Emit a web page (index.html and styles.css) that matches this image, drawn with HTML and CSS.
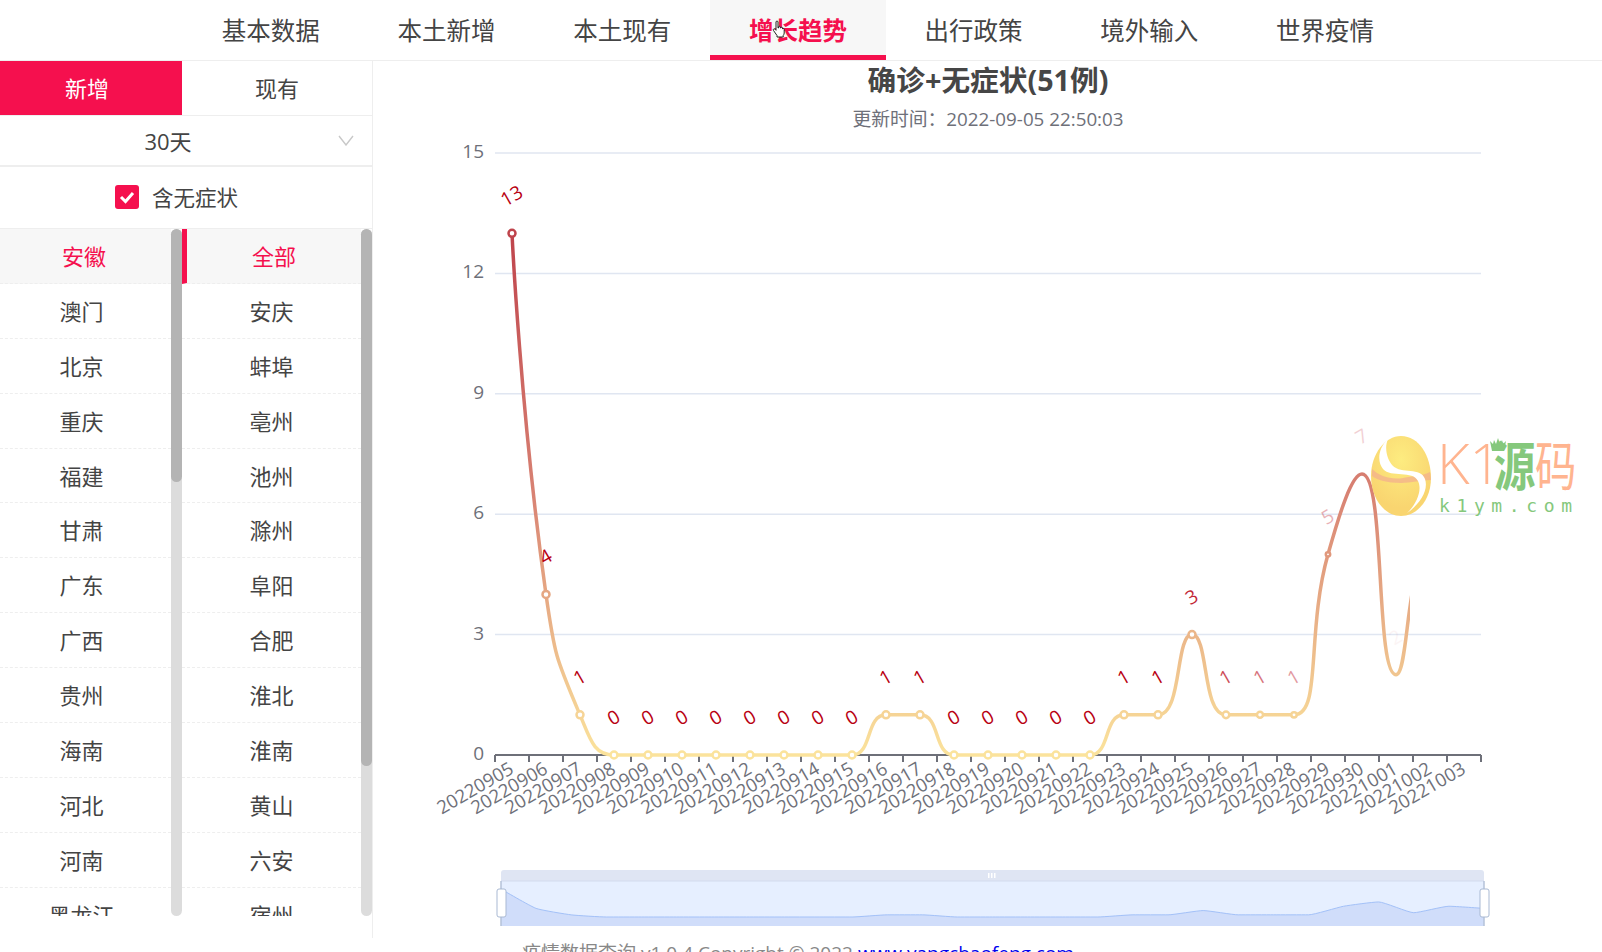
FILE: index.html
```html
<!DOCTYPE html>
<html>
<head>
    <meta charset="utf-8" />
    <title>疫情数据查询</title>
    <link rel="stylesheet" href="styles.css">
</head>
<body>
    <ul class="nav">
        <li>基本数据</li>
        <li>本土新增</li>
        <li>本土现有</li>
        <li class="nav_active">增长趋势
            <svg class="hand" width="14" height="18" viewBox="0 0 14 18">
                <path d="M4 2c0-1.3 2-1.3 2 0v6h.5V7c0-1 1.8-1 1.8 0v1h.5c0-1 1.8-1 1.8 0v1c0-.8 1.6-.8 1.6.2V13c0 1-.4 1.6-1 2.5v1.5H5v-1.5L1.5 10.5c-.8-1.2.6-2.3 1.6-1.2l.9 1z" fill="#fff" stroke="#222" stroke-width="1"/>
            </svg>
        </li>
        <li>出行政策</li>
        <li>境外输入</li>
        <li>世界疫情</li>
    </ul>
    <div class="main">
        <div class="side">
            <div class="type_tabs">
                <div class="type_new">新增</div>
                <div class="type_now">现有</div>
            </div>
            <div class="days">
                <span class="days_text">30天</span>
                <svg class="days_arrow" width="16" height="11" viewBox="0 0 16 11">
                    <polyline points="1,1 8,10 15,1" fill="none" stroke="#c8c8c8" stroke-width="1.4"/>
                </svg>
            </div>
            <div class="check_row">
                <span class="check_box">
                    <svg width="16" height="14" viewBox="0 0 16 14">
                        <polyline points="2,7 6.5,11.5 14,3" fill="none" stroke="#fff" stroke-width="3"/>
                    </svg>
                </span>
                <span>含无症状</span>
            </div>
            <div class="lists">
                <div class="list list_left">
                    <ul>
                        <li class="li_active">安徽</li>
                        <li>澳门</li>
                        <li>北京</li>
                        <li>重庆</li>
                        <li>福建</li>
                        <li>甘肃</li>
                        <li>广东</li>
                        <li>广西</li>
                        <li>贵州</li>
                        <li>海南</li>
                        <li>河北</li>
                        <li>河南</li>
                        <li>黑龙江</li>
                    </ul>
                    <div class="bar"><div class="thumb thumb_left"></div></div>
                </div>
                <div class="list list_right">
                    <ul>
                        <li class="li_active">全部</li>
                        <li>安庆</li>
                        <li>蚌埠</li>
                        <li>亳州</li>
                        <li>池州</li>
                        <li>滁州</li>
                        <li>阜阳</li>
                        <li>合肥</li>
                        <li>淮北</li>
                        <li>淮南</li>
                        <li>黄山</li>
                        <li>六安</li>
                        <li>宿州</li>
                    </ul>
                    <div class="bar"><div class="thumb thumb_right"></div></div>
                </div>
            </div>
        </div>
        <div class="chart">
            <svg id="chartSvg" width="1228" height="877" viewBox="374 61 1228 877" xmlns="http://www.w3.org/2000/svg">
                <defs>
                    <linearGradient id="lineColor" gradientUnits="userSpaceOnUse" x1="0" y1="755" x2="0" y2="233">
                        <stop offset="0" stop-color="#fbe39c"/>
                        <stop offset="0.5" stop-color="#d88273"/>
                        <stop offset="1" stop-color="#bf444c"/>
                    </linearGradient>
                    <clipPath id="lineClip"><rect x="374" y="61" width="1037" height="877"/></clipPath>
                    <radialGradient id="eggTop" cx="0.5" cy="0.3" r="0.6">
                        <stop offset="0" stop-color="#fdec80"/>
                        <stop offset="1" stop-color="#f9d570"/>
                    </radialGradient>
                </defs>
                <text class="c_title" x="989" y="91">确诊+无症状(51例)</text>
                <text class="c_sub" x="989" y="126">更新时间：2022-09-05 22:50:03</text>
                <g id="grid"></g>
                <g id="lineBox" clip-path="url(#lineClip)"></g>
                <g id="points"></g>
                <g id="zoomBar"></g>
                <g class="mark">
                    <g transform="translate(1372 436)">
                        <path d="M30 0C48 0 60 20 60 42C60 64 46 80 30 80C13 80 0 62 0 40C0 18 14 0 30 0Z" fill="url(#eggTop)"/>
                        <path d="M1 33C8 40 20 44 32 42C42 40 52 40 59 36L60 44C50 44 40 47 30 47C16 47 6 44 1 40Z" fill="#f3b08e" opacity="0.75"/>
                        <path d="M17 3C7 12 6 26 12 33C20 42 42 34 47 45C52 55 44 70 36 77C48 69 58 55 54 43C50 31 30 38 22 30C16 24 13 12 17 3Z" fill="#fff"/>
                    </g>
                    <text class="mark_k" x="1438" y="484">K1</text>
                    <path d="M1491 441l3 3 1-4 2 4 2-6 2 6 2-4 1 4 3-3-2 10h-12z" fill="#85c87c"/>
                    <text class="mark_y" transform="translate(1495 486) scale(0.9 1.15)">源</text>
                    <text class="mark_m" transform="translate(1536 486) scale(0.9 1.15)">码</text>
                    <text class="mark_url" x="1440" y="512" textLength="133" lengthAdjust="spacing">k1ym.com</text>
                </g>
            </svg>
        </div>
    </div>
    <div class="foot">疫情数据查询 v1.0.4 Copyright © 2022 <a href="#">www.yangchaofeng.com</a></div>
    <script src="chart.js"></script>
</body>
</html>
```
FILE: styles.css
```css
html, body {
    margin:0;
    padding:0;
    height:952px;
    overflow:hidden;
    background:#fff;
    font-family:"Open Sans","Noto Sans CJK SC",sans-serif;
    color:#444;
}
ul {
    margin:0;
    padding:0;
    list-style:none;
}
.nav {
    display:flex;
    height:60px;
    padding-left:183px;
    border-bottom:1px solid #eee;
}
    .nav li {
        position:relative;
        width:175.7px;
        height:60px;
        box-sizing:border-box;
        line-height:62px;
        text-align:center;
        font-size:24.5px;
    }
    .nav .nav_active {
        background:#f7f7f7;
        border-bottom:5px solid #f5104e;
        color:#f5104e;
        font-weight:700;
    }
.hand {
    position:absolute;
    left:62px;
    top:20px;
}
.main {
    display:flex;
    height:877px;
}
.side {
    width:372px;
    border-right:1px solid #eee;
    flex:none;
}
.type_tabs {
    display:flex;
    height:54px;
    line-height:54px;
    border-bottom:1px solid #eee;
    font-size:22px;
    text-align:center;
}
.type_new {
    width:182px;
    box-sizing:border-box;
    padding-right:8px;
    background:#f5104e;
    color:#fff;
}
.type_now {
    flex:1;
}
.days {
    display:flex;
    align-items:center;
    box-sizing:border-box;
    padding-bottom:2px;
    height:51px;
    border-bottom:2px solid #eee;
    font-size:22px;
}
.days_text {
    width:336px;
    text-align:center;
}
.days_arrow {
    margin-left:2px;
    margin-top:1px;
}
.check_row {
    display:flex;
    align-items:center;
    justify-content:center;
    gap:13px;
    height:59px;
    padding-right:19px;
    padding-bottom:2px;
    border-bottom:1px solid #eee;
    font-size:21.5px;
}
.check_box {
    display:flex;
    align-items:center;
    justify-content:center;
    width:24px;
    height:24px;
    border-radius:3px;
    background:#f5104e;
}
.lists {
    display:flex;
    height:687px;
    overflow:hidden;
}
.list {
    display:flex;
}
.list_left {
    width:182px;
}
.list_right {
    width:190px;
}
.list ul {
    flex:1;
}
.list li {
    box-sizing:border-box;
    height:54.9px;
    line-height:54px;
    border-bottom:1px dashed #eee;
    text-align:center;
    font-size:22px;
}
.list_left li {
    padding-right:8px;
}
.list .li_active {
    background:#f7f7f7;
    color:#f5104e;
}
.list_left .li_active {
    padding-right:3px;
}
.list_right .li_active {
    border-left:5px solid #f5104e;
}
.bar {
    width:11px;
    height:687px;
    flex:none;
    border-radius:6px;
    background:#dcdcdc;
}
.thumb {
    border-radius:6px;
    background:#b4b4b4;
}
.thumb_left {
    height:253px;
}
.thumb_right {
    height:537px;
}
.chart {
    flex:1;
}
    .chart svg {
        display:block;
    }
.c_title {
    font-size:28.7px;
    font-weight:700;
    fill:#464646;
    text-anchor:middle;
}
.c_sub {
    font-size:18.8px;
    fill:#6e7079;
    text-anchor:middle;
}
.y_text {
    font-size:19px;
    fill:#6e7079;
    text-anchor:end;
}
.x_text {
    font-size:18.5px;
    fill:#6e7079;
    text-anchor:end;
}
.p_text {
    font-size:19px;
    fill:#b80012;
    text-anchor:middle;
}
.mark_k {
    font-size:56px;
    font-weight:300;
    fill:#ffb48f;
}
.mark_y {
    font-size:46px;
    font-weight:700;
    fill:#85c87c;
}
.mark_m {
    font-size:46px;
    fill:#ffb48f;
}
.mark_url {
    font-size:18px;
    font-family:"DejaVu Sans Mono",monospace;
    fill:#85c87c;
}
.foot {
    padding:3px 6px 0 0;
    line-height:24px;
    text-align:center;
    font-size:19px;
    color:#888;
}
```
FILE: chart.js
```js
window.onload = function () {
    var NS = 'http://www.w3.org/2000/svg';
    var data = [13, 4, 1, 0, 0, 0, 0, 0, 0, 0, 0, 1, 1, 0, 0, 0, 0, 0, 1, 1, 3, 1, 1, 1, 5, 7, 2, 5, 4];
    var days = [];
    for (var d = 5; d <= 30; d++) {
        days.push('202209' + (d < 10 ? '0' + d : d));
    }
    days.push('20221001', '20221002', '20221003');

    var left = 496, right = 1482, zero = 755, unit = 120.4 / 3, step = 34;
    //动画还没播完，后面几个点的文字是淡的
    var fade = { 20: 0.85, 21: 0.7, 22: 0.55, 23: 0.4, 24: 0.3, 25: 0.18, 26: 0.04, 27: 0, 28: 0 };
    var dotSize = { 21: 3.3, 22: 3, 23: 2.7, 24: 2.2, 25: 0, 26: 0, 27: 0, 28: 0 };

    function add(parent, tag, attrs, text) {
        var el = document.createElementNS(NS, tag);
        for (var k in attrs) {
            el.setAttribute(k, attrs[k]);
        }
        if (text !== undefined) {
            el.textContent = text;
        }
        parent.appendChild(el);
        return el;
    }

    //折线平滑，极值点处切线水平
    function smoothPath(pts, smooth) {
        var d = 'M' + pts[0][0] + ' ' + pts[0][1];
        var cx0 = pts[0][0], cy0 = pts[0][1];
        function limit(v, a, b) {
            return Math.max(Math.min(v, Math.max(a, b)), Math.min(a, b));
        }
        for (var i = 1; i < pts.length; i++) {
            var x = pts[i][0], y = pts[i][1];
            var px = pts[i - 1][0], py = pts[i - 1][1];
            var nx = i + 1 < pts.length ? pts[i + 1][0] : x;
            var ny = i + 1 < pts.length ? pts[i + 1][1] : y;
            var vx = nx - px, vy = ny - py;
            var lenPrev = Math.sqrt((x - px) * (x - px) + (y - py) * (y - py));
            var lenNext = Math.sqrt((nx - x) * (nx - x) + (ny - y) * (ny - y));
            var cx1, cy1, nextX, nextY;
            if (lenNext === 0) {
                cx1 = x;
                cy1 = y;
                nextX = x;
                nextY = y;
            } else {
                var ratio = lenNext / (lenNext + lenPrev);
                nextX = limit(x + vx * smooth * ratio, nx, x);
                nextY = limit(y + vy * smooth * ratio, ny, y);
                vx = nextX - x;
                vy = nextY - y;
                cx1 = limit(x - vx * lenPrev / lenNext, px, x);
                cy1 = limit(y - vy * lenPrev / lenNext, py, y);
                vx = x - cx1;
                vy = y - cy1;
                nextX = x + vx * lenNext / lenPrev;
                nextY = y + vy * lenNext / lenPrev;
            }
            d += 'C' + cx0 + ' ' + cy0 + ' ' + cx1 + ' ' + cy1 + ' ' + x + ' ' + y;
            cx0 = nextX;
            cy0 = nextY;
        }
        return d;
    }

    function dotColor(v) {
        var a, b, t;
        if (v <= 6.5) {
            a = [251, 227, 156];
            b = [216, 130, 115];
            t = v / 6.5;
        } else {
            a = [216, 130, 115];
            b = [191, 68, 76];
            t = (v - 6.5) / 6.5;
        }
        return 'rgb(' + [0, 1, 2].map(function (n) {
            return Math.round(a[n] + (b[n] - a[n]) * t);
        }).join(',') + ')';
    }

    //坐标轴
    var grid = document.getElementById('grid');
    for (var v = 0; v <= 5; v++) {
        var gy = zero - v * 3 * unit;
        if (v > 0) {
            add(grid, 'line', { x1: left, x2: right, y1: gy, y2: gy, stroke: '#e0e6f1', 'stroke-width': 1.5 });
        }
        add(grid, 'text', { 'class': 'y_text', x: 485, y: gy + 5 }, v * 3);
    }
    add(grid, 'line', { x1: left, x2: right, y1: zero, y2: zero, stroke: '#6e7079', 'stroke-width': 2 });
    for (var t = 0; t <= days.length; t++) {
        var tx = left + t * step;
        add(grid, 'line', { x1: tx, x2: tx, y1: zero, y2: zero + 7, stroke: '#6e7079', 'stroke-width': 2 });
    }
    days.forEach(function (day, i) {
        var lx = left + (i + 0.5) * step - 3, ly = zero + 7;
        add(grid, 'text', {
            'class': 'x_text',
            x: lx,
            y: ly,
            transform: 'rotate(-30 ' + lx + ' ' + ly + ') translate(0 12)'
        }, day);
    });

    //折线
    var pts = data.map(function (v, i) {
        return [left + (i + 0.5) * step, zero - v * unit];
    });
    add(document.getElementById('lineBox'), 'path', {
        d: smoothPath(pts, 0.5),
        fill: 'none',
        stroke: 'url(#lineColor)',
        'stroke-width': 3.5
    });

    var points = document.getElementById('points');
    data.forEach(function (v, i) {
        var o = fade[i] === undefined ? 1 : fade[i];
        var r = dotSize[i] === undefined ? 3.5 : dotSize[i];
        if (r > 0) {
            add(points, 'circle', { cx: pts[i][0], cy: pts[i][1], r: r, fill: '#fff', stroke: dotColor(v), 'stroke-width': 2.5 });
        }
        if (o > 0) {
            var lx = pts[i][0], ly = pts[i][1] - 37;
            add(points, 'text', {
                'class': 'p_text',
                x: lx,
                y: ly + 6,
                opacity: o,
                transform: 'rotate(-30 ' + lx + ' ' + ly + ')'
            }, v);
        }
    });

    //底部缩放条
    var bar = document.getElementById('zoomBar');
    var x0 = 502, x1 = 1485;
    add(bar, 'path', { d: 'M' + x0 + ' 881V873q0-3 3-3H' + (x1 - 3) + 'q3 0 3 3V881Z', fill: '#dfe5f3' });
    add(bar, 'rect', { x: x0, y: 881, width: x1 - x0, height: 45, fill: '#e6efff' });
    add(bar, 'line', { x1: x0, x2: x1, y1: 881, y2: 881, stroke: '#d2dbee', 'stroke-width': 1 });
    var small = data.map(function (v, i) {
        return [x0 + i * (x1 - x0) / (data.length - 1), 917 - v * 2.15];
    });
    var curve = smoothPath(small, 0.15);
    add(bar, 'path', { d: curve + 'V926H' + x0 + 'Z', fill: '#d0ddfa' });
    add(bar, 'path', { d: curve, fill: 'none', stroke: '#a3c1f8', 'stroke-width': 1 });
    [x0, x1].forEach(function (x) {
        add(bar, 'line', { x1: x, x2: x, y1: 881, y2: 926, stroke: '#b4c2d9', 'stroke-width': 1.5 });
        add(bar, 'rect', { x: x - 4, y: 889, width: 9, height: 28, rx: 2, fill: '#fff', stroke: '#a9b9d3', 'stroke-width': 1 });
    });
    [-3, 0, 3].forEach(function (n) {
        add(bar, 'rect', { x: 992 + n, y: 873, width: 1.5, height: 5, fill: '#fff' });
    });
};
```
